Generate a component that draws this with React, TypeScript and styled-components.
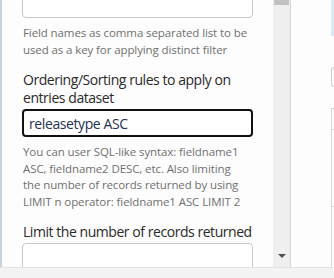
import { useLayoutEffect, useRef } from "react";
import styled, { createGlobalStyle } from "styled-components";

const GlobalStyle = createGlobalStyle`
  body {
    margin: 0;
    background: #fdfdfd;
    font-family: "Open Sans", "Noto Sans", sans-serif;
  }
`;

const Frame = styled.div`
  width: 334px;
  height: 278px;
  display: flex;
  flex-direction: column;
  overflow: hidden;
`;

const Main = styled.div`
  display: flex;
  height: 267px;
`;

const Edge = styled.div`
  width: 2px;
  background: #c9d2e2;
`;

const Scroller = styled.div`
  width: 271px;
  overflow-y: scroll;
  scrollbar-width: none;
  padding: 0 15px 0 20px;
  box-sizing: border-box;
`;

const Field = styled.div`
  display: flex;
  flex-direction: column;
  margin-bottom: 13px;
`;

const Label = styled.label`
  font-size: 14px;
  line-height: 18px;
  letter-spacing: -0.45px;
  color: #2a2a2a;
  margin-bottom: 2px;
  padding-left: 1px;
`;

const TextInput = styled.input<{ $active?: boolean }>`
  box-sizing: border-box;
  height: 28px;
  width: 231px;
  border: ${(p) => (p.$active ? "2px solid #111" : "1px solid #c8c8c8")};
  border-radius: 4px;
  padding: 0 ${(p) => (p.$active ? "5px" : "6px")};
  font-family: inherit;
  font-size: 14px;
  letter-spacing: -0.4px;
  color: #1f3153;
  background: #fff;
  outline: none;
  caret-color: #111;
`;

const Help = styled.div`
  font-size: 11.5px;
  line-height: 16.5px;
  letter-spacing: -0.1px;
  color: #707070;
  margin-top: 7px;
  padding-left: 1px;
  white-space: nowrap;
`;

const HelpLine = styled.span`
  display: block;
`;

const Scrollbar = styled.div`
  width: 17px;
  background: #efefef;
  display: flex;
  flex-direction: column;
  justify-content: space-between;
  align-items: center;
`;

const Thumb = styled.div`
  width: 15px;
  height: 5px;
  background: #c1c1c1;
`;

const Arrow = styled.div`
  width: 0;
  height: 0;
  border-left: 4px solid transparent;
  border-right: 4px solid transparent;
  border-top: 4px solid #505050;
  margin-bottom: 9px;
`;

const Divider = styled.div`
  width: 1px;
  background: #d4d4d4;
`;

const Side = styled.div`
  flex: 1;
  padding-left: 40px;
  display: flex;
  flex-direction: column;
`;

const Badge = styled.div`
  height: 36px;
  background: #dce7f8;
`;

const SideButton = styled.div`
  margin-top: 31px;
  height: 18px;
  border: 1px solid #cfcfcf;
  border-right: none;
  border-radius: 3px 0 0 3px;
`;

const SideTable = styled.div`
  margin-top: 21px;
  flex: 1;
  border-left: 1px solid #d8d8d8;
  border-top: 1px solid #d8d8d8;
  display: flex;
  flex-direction: column;
`;

const SideRow = styled.div<{ $h: number }>`
  height: ${(p) => p.$h}px;
  border-bottom: 1px solid #dcdcdc;
`;

const Footer = styled.div`
  flex: 1;
  background: #f3f3f3;
  border-top: 1px solid #e2e2e2;
`;

const distinctHelp = [
  "Field names as comma separated list to be",
  "used as a key for applying distinct filter",
];

const orderHelp = [
  "You can user SQL-like syntax: fieldname1",
  "ASC, fieldname2 DESC, etc. Also limiting",
  "the number of records returned by using",
  "LIMIT n operator: fieldname1 ASC LIMIT 2",
];

export default function App() {
  const ref = useRef<HTMLDivElement>(null);

  useLayoutEffect(() => {
    if (ref.current) ref.current.scrollTop = 10;
  }, []);

  return (
    <Frame>
      <GlobalStyle />
      <Main>
        <Edge />
        <Scroller ref={ref}>
          <Field>
            <TextInput />
            <Help>
              {distinctHelp.map((line) => (
                <HelpLine key={line}>{line}</HelpLine>
              ))}
            </Help>
          </Field>
          <Field>
            <Label>Ordering/Sorting rules to apply on entries dataset</Label>
            <TextInput $active defaultValue="releasetype ASC" autoFocus />
            <Help>
              {orderHelp.map((line) => (
                <HelpLine key={line}>{line}</HelpLine>
              ))}
            </Help>
          </Field>
          <Field>
            <Label>Limit the number of records returned</Label>
            <TextInput />
          </Field>
        </Scroller>
        <Scrollbar>
          <Thumb />
          <Arrow />
        </Scrollbar>
        <Divider />
        <Side>
          <Badge />
          <SideButton />
          <SideTable>
            <SideRow $h={20} />
            <SideRow $h={76} />
          </SideTable>
        </Side>
      </Main>
      <Footer />
    </Frame>
  );
}
